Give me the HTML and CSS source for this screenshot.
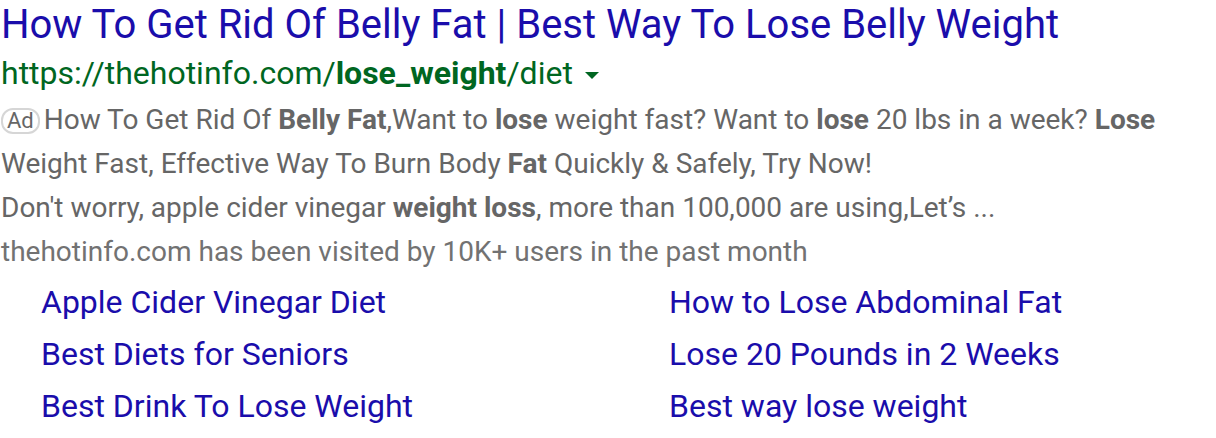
FILE: index.html
```html
<!DOCTYPE html>
<html>
<head>
<meta charset="utf-8">
<link rel="stylesheet" href="styles.css">
</head>
<body>
<div class="result">
  <div class="title">How To Get Rid Of Belly Fat | Best Way To Lose Belly Weight</div>
  <div class="url">https://thehotinfo.com/<b>lose_weight</b>/diet <span class="caret"></span></div>
  <div class="desc first"><span class="ad">Ad</span> How To Get Rid Of <b>Belly Fat</b>,Want to <b>lose</b> weight fast? Want to <b>lose</b> 20 lbs in a week? <b>Lose</b> Weight Fast, Effective Way To Burn Body <b>Fat</b> Quickly &amp; Safely, Try Now!</div>
  <div class="desc">Don't worry, apple cider vinegar <b>weight loss</b>, more than 100,000 are using,Let’s ...</div>
  <div class="visited">thehotinfo.com has been visited by 10K+ users in the past month</div>
  <div class="sitelinks">
    <div class="link">Apple Cider Vinegar Diet</div>
    <div class="link">How to Lose Abdominal Fat</div>
    <div class="link">Best Diets for Seniors</div>
    <div class="link">Lose 20 Pounds in 2 Weeks</div>
    <div class="link">Best Drink To Lose Weight</div>
    <div class="link">Best way lose weight</div>
  </div>
</div>
</body>
</html>
```
FILE: styles.css
```css
html, body {
  margin: 0;
  padding: 0;
  background: #fff;
}
body {
  font-family: Roboto, "Liberation Sans", Arial, sans-serif;
  width: 1216px;
  height: 438px;
  overflow: hidden;
}
.result {
  padding: 0 0 0 1px;
}
.title {
  color: #1a0dab;
  font-size: 40px;
  line-height: 50px;
  white-space: nowrap;
}
.url {
  color: #006621;
  font-size: 32px;
  line-height: 46px;
  white-space: nowrap;
}
.url b {
  font-weight: 700;
}
.caret {
  display: inline-block;
  width: 0;
  height: 0;
  border-left: 7px solid transparent;
  border-right: 7px solid transparent;
  border-top: 7px solid #006621;
  vertical-align: middle;
  margin-left: 4px;
}
.desc {
  color: #666;
  font-size: 28px;
  line-height: 44px;
  width: 1190px;
}
.desc.first {
  padding-top: 2px;
}
.desc b {
  color: #666;
}
.ad {
  display: inline-block;
  border: 2px solid #d6d6d6;
  border-radius: 12px;
  font-size: 22px;
  line-height: 22px;
  padding: 0 4px;
  color: #666;
  vertical-align: 1px;
  margin-right: -3px;
}
.visited {
  color: #727272;
  font-size: 28px;
  line-height: 44px;
}
.sitelinks {
  display: grid;
  grid-template-columns: 628px 500px;
  padding-left: 40px;
  padding-top: 2px;
}
.link {
  color: #1a0dab;
  font-size: 32px;
  line-height: 52px;
  white-space: nowrap;
}
```
